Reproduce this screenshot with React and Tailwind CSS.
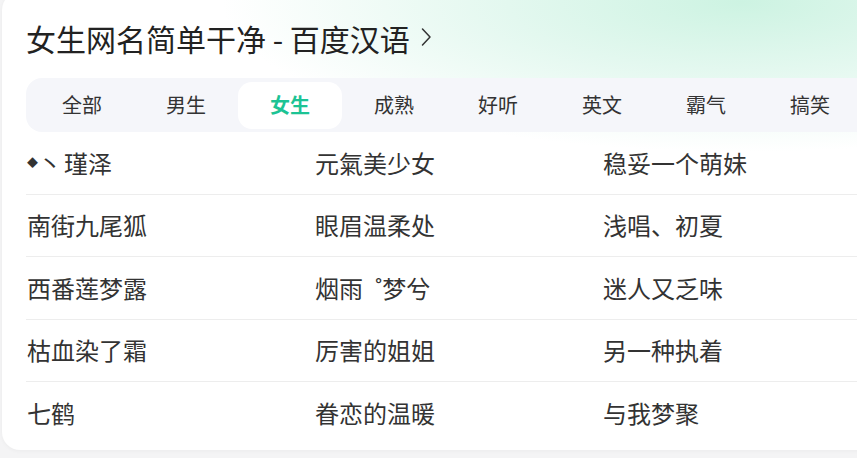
import React, { useState } from 'react'

const TABS = ['全部', '男生', '女生', '成熟', '好听', '英文', '霸气', '搞笑']

const NAMES = [
  ['瑾泽', '元氣美少女', '稳妥一个萌妹'],
  ['南街九尾狐', '眼眉温柔处', '浅唱、初夏'],
  ['西番莲梦露', '烟雨\u2002˚梦兮', '迷人又乏味'],
  ['枯血染了霜', '厉害的姐姐', '另一种执着'],
  ['七鹤', '眷恋的温暖', '与我梦聚'],
]

function App() {
  const [active, setActive] = useState(2)

  return (
    <div
      className="h-[458px] w-[857px] overflow-hidden bg-[#f4f4f5] pl-[2px]"
      style={{ fontFamily: '"Noto Sans CJK SC", "Noto Sans", sans-serif' }}
    >
      {/* 卡片 */}
      <div className="-mt-[8px] h-[458px] w-[880px] rounded-[18px] bg-white bg-[radial-gradient(ellipse_520px_150px_at_740px_10px,#cdf3e2_0%,#e3f8ef_45%,rgba(255,255,255,0)_100%)] pl-[24px] pt-[8px] shadow-[0_1px_4px_rgba(0,0,0,0.04)]">
        {/* 标题 */}
        <div className="flex h-[78px] items-center gap-[10px] pb-[2px] text-[30px] leading-none text-[#222]">
          <span>女生网名简单干净 - 百度汉语</span>
          <svg width="12" height="20" viewBox="0 0 12 20" fill="none" className="mt-[-2px]">
            <path d="M2.5 2l7.5 8-7.5 8" stroke="#333" strokeWidth="1.5" strokeLinecap="round" strokeLinejoin="round" />
          </svg>
        </div>

        {/* 分类标签 */}
        <div className="flex h-[54px] items-center rounded-[16px] bg-[#f5f6fa] px-[4px]">
          {TABS.map((t, i) => (
            <button
              key={t}
              onClick={() => setActive(i)}
              className={
                i === active
                  ? 'flex h-[47px] w-[104px] shrink-0 items-center justify-center rounded-[14px] bg-white text-[20px] font-bold text-[#1cc394]'
                  : 'flex h-[47px] w-[104px] shrink-0 items-center justify-center text-[20px] text-[#333]'
              }
            >
              {t}
            </button>
          ))}
        </div>

        {/* 名字列表 */}
        <div className="flex flex-col">
          {NAMES.map((row, r) => (
            <div
              key={r}
              className={
                r === NAMES.length - 1
                  ? 'grid h-[62.5px] grid-cols-[288px_288px_1fr] items-center text-[24px] text-[#333]'
                  : 'grid h-[62.5px] grid-cols-[288px_288px_1fr] items-center border-b border-[#ededed] text-[24px] text-[#333]'
              }
            >
              {row.map((n, c) => (
                <span key={n} className="flex items-center pl-[1px]">
                  {r === 0 && c === 0 && (
                    <>
                      <span className="text-[11px] leading-none">◆</span>
                      <span className="mr-[2px]">丶</span>
                    </>
                  )}
                  {n}
                </span>
              ))}
            </div>
          ))}
        </div>
      </div>
    </div>
  )
}

export default App
